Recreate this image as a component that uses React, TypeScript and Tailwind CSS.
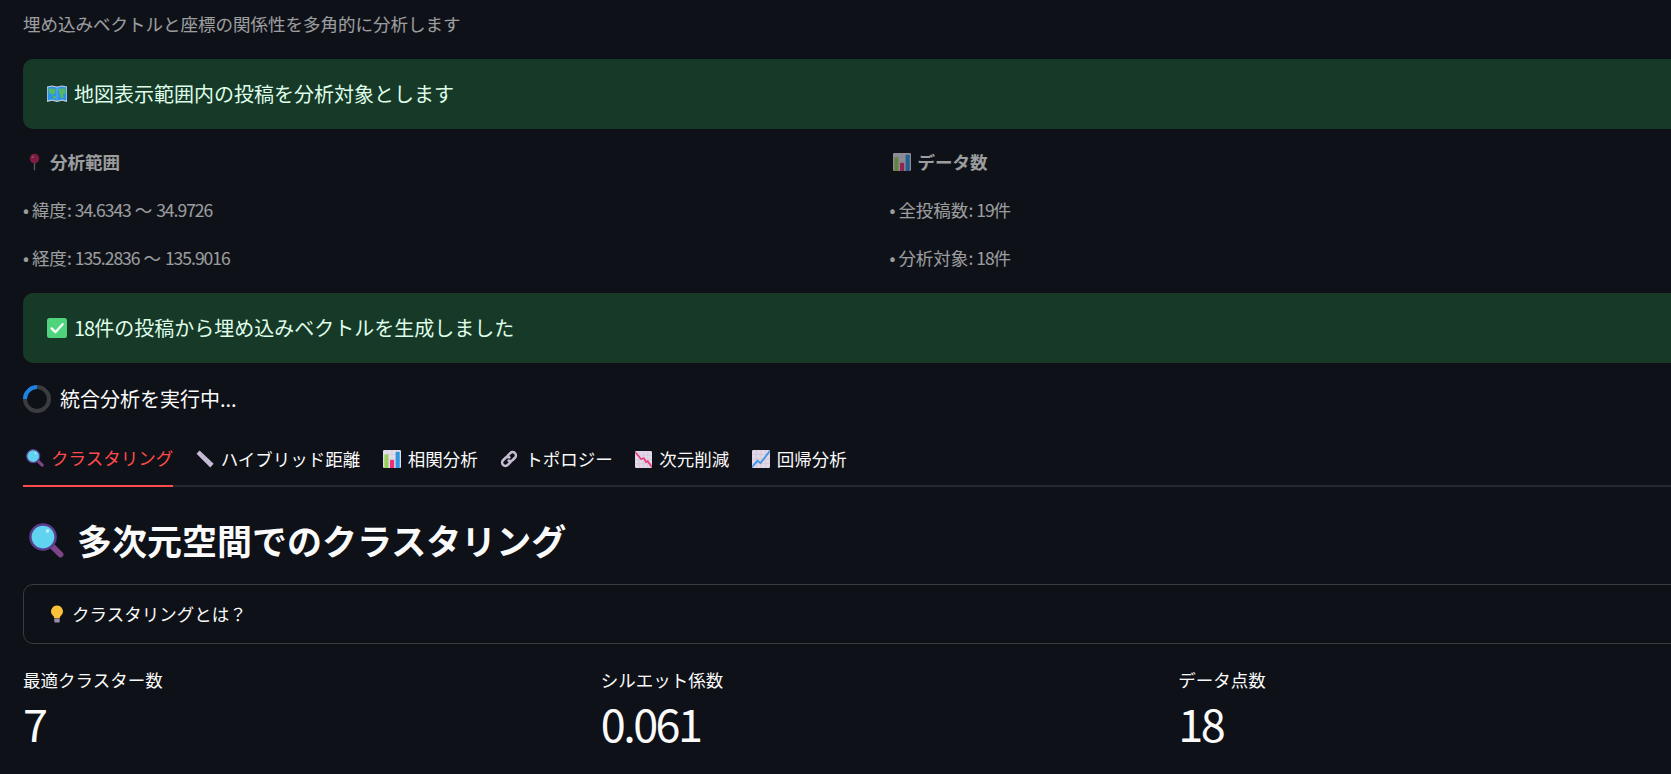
const jp = "font-['Noto_Sans_CJK_JP','Noto_Sans',sans-serif]";

const MapIcon = ({ className }: { className?: string }) => (
  <svg viewBox="0 0 20 20" className={className}>
    <path d="M0 2.6 L5 1.4 L10 2.6 L15 1.4 L20 2.6 V18 L15 16.8 L10 18 L5 16.8 L0 18Z" fill="#c4cde0" />
    <path d="M0.7 3.4 L5 2.4 L9.8 3.5 V16.8 L5 15.6 L0.7 16.6Z" fill="#2a93ea" />
    <path d="M10.2 3.5 L15 2.4 L19.3 3.4 V16.6 L15 15.6 L10.2 16.8Z" fill="#2a93ea" />
    <path d="M1.6 4.6 L8.4 4.8 L8 9.4 L5.4 11 L2.4 9Z M11.2 4.8 L18.4 4.6 L18.6 9.4 L16 10.2 L16.8 14 L14 14 L12.4 9.6Z M5.8 11.8 L9 12 L8.6 15 L6.2 14.4Z" fill="#57b862" />
  </svg>
);

const PinIcon = ({ className }: { className?: string }) => (
  <svg viewBox="0 0 20 20" className={className}>
    <rect x="9.2" y="8" width="1.6" height="12" rx="0.8" fill="#8b8d96" />
    <circle cx="10" cy="6" r="5.6" fill="#c9245c" />
    <circle cx="8" cy="4" r="1.4" fill="#e86a92" />
  </svg>
);

const BarsIcon = ({ className }: { className?: string }) => (
  <svg viewBox="0 0 20 20" className={className}>
    <rect width="20" height="20" rx="1.5" fill="#e4dfe9" />
    <path d="M0 5H20M0 10H20M0 15H20M5 0V20M10 0V20M15 0V20" stroke="#cfc8d8" strokeWidth="0.6" />
    <rect x="1.5" y="5" width="4.6" height="15" fill="#9ad05a" />
    <rect x="7.8" y="11" width="4.6" height="9" fill="#ee2f78" />
    <rect x="14" y="2" width="4.6" height="18" fill="#2f96e0" />
  </svg>
);

const CheckIcon = ({ className }: { className?: string }) => (
  <svg viewBox="0 0 20 20" className={className}>
    <rect width="20" height="20" rx="2.5" fill="#4fd47d" />
    <path d="M4.6 10.4 L8.4 14.2 L15.6 6.2" fill="none" stroke="#f4fff7" strokeWidth="2.4" strokeLinecap="round" strokeLinejoin="round" />
  </svg>
);

const LensIcon = ({ className }: { className?: string }) => (
  <svg viewBox="0 0 20 20" className={className}>
    <path d="M12.6 12.6 L18 18" stroke="#7d4488" strokeWidth="3.4" strokeLinecap="round" />
    <circle cx="8" cy="8" r="7.2" fill="#5fd3f0" stroke="#5a3c8c" strokeWidth="1.4" />
    <circle cx="10.6" cy="4.6" r="1" fill="#c4f1fb" />
  </svg>
);

const RulerIcon = ({ className }: { className?: string }) => (
  <svg viewBox="0 0 20 20" className={className}>
    <path d="M4 0.6 L19.6 15.4 L15.8 19.4 L0.6 4.2Z" fill="#c7bcd6" />
    <path d="M5.4 5.8 L7 4.2 M8.4 8.8 L10 7.2 M11.4 11.8 L13 10.2 M14.4 14.8 L16 13.2" stroke="#a99dbd" strokeWidth="0.8" />
  </svg>
);

const LinkIcon = ({ className }: { className?: string }) => (
  <svg viewBox="0 0 20 20" className={className}>
    <g fill="none" stroke="#c8bcd4" strokeWidth="2.8" strokeLinecap="round">
      <path d="M8.6 6.2 L11.4 3.4 A3.6 3.6 0 0 1 16.6 8.6 L13.8 11.4 A3.6 3.6 0 0 1 9.6 11.8" />
      <path d="M11.4 13.8 L8.6 16.6 A3.6 3.6 0 0 1 3.4 11.4 L6.2 8.6 A3.6 3.6 0 0 1 10.4 8.2" />
    </g>
  </svg>
);

const TrendIcon = ({ up, className }: { up?: boolean; className?: string }) => (
  <svg viewBox="0 0 20 20" className={className}>
    <rect width="20" height="20" rx="1.5" fill="#e2d8e8" />
    <path d="M0 5H20M0 10H20M0 15H20M5 0V20M10 0V20M15 0V20" stroke="#cbbfd6" strokeWidth="0.6" />
    {up ? (
      <path d="M0.5 18.5 L6 12 L9.5 14.5 L19.5 1.5" fill="none" stroke="#3f97e6" strokeWidth="2" />
    ) : (
      <path d="M0.5 1.5 L7 9.5 L10.5 8.5 L13 13 L15 12 L19.5 18.5" fill="none" stroke="#ee3a78" strokeWidth="2" />
    )}
  </svg>
);

const BulbIcon = ({ className }: { className?: string }) => (
  <svg viewBox="0 0 20 20" className={className}>
    <path d="M10 0.5 A6.6 6.6 0 0 1 14.4 12 C13.4 13 13.2 13.6 13.2 14.6 H6.8 C6.8 13.6 6.6 13 5.6 12 A6.6 6.6 0 0 1 10 0.5Z" fill="#fbc13a" />
    <rect x="7" y="15" width="6" height="4.4" rx="1" fill="#9d8aa8" />
  </svg>
);

const tabs = [
  { label: "クラスタリング", icon: <LensIcon className="ml-[3px] w-[18px] h-[18px]" />, gap: "gap-[7px]", active: true },
  { label: "ハイブリッド距離", icon: <RulerIcon className="w-[18px] h-[18px]" />, gap: "gap-[7px]" },
  { label: "相関分析", icon: <BarsIcon className="w-[18px] h-[18px]" />, gap: "gap-[7px]" },
  { label: "トポロジー", icon: <LinkIcon className="w-[18px] h-[18px]" />, gap: "gap-[7px]" },
  { label: "次元削減", icon: <TrendIcon className="w-[17px] h-[17px]" />, gap: "gap-[7px]" },
  { label: "回帰分析", icon: <TrendIcon up className="w-[18px] h-[18px]" />, gap: "gap-[7px]" },
];

const metrics = [
  { label: "最適クラスター数", value: "7" },
  { label: "シルエット係数", value: "0.061" },
  { label: "データ点数", value: "18" },
];

// digits in the reference are narrower than Noto's, tighten them
const Num = ({ children }: { children: React.ReactNode }) => (
  <span className="tracking-[-1px]">{children}</span>
);

const Colon = () => <span className="tracking-[-0.5px]">: </span>;

const Banner = ({ icon, children }: { icon: React.ReactNode; children: React.ReactNode }) => (
  <div className="flex h-[70px] items-center gap-[7px] rounded-[10px] bg-[#173928] pl-6 text-[20px] text-[#dffde9]">
    {icon}
    <span>{children}</span>
  </div>
);

const InfoColumn = ({
  icon,
  title,
  lines,
}: {
  icon: React.ReactNode;
  title: string;
  lines: React.ReactNode[];
}) => (
  <div className="text-[17.5px] leading-[26px] opacity-60">
    <div className="flex h-[26px] items-center gap-[7px] pl-[3px] font-bold">
      {icon}
      <span>{title}</span>
    </div>
    {lines.map((line, i) => (
      <div key={i} className="mt-[22px] h-[26px] whitespace-nowrap">
        <span className="tracking-[-0.5px]">• </span>
        {line}
      </div>
    ))}
  </div>
);

export default function App() {
  return (
    <div className={`h-[774px] w-[1671px] overflow-hidden bg-[#0e1117] text-[#fafafa] ${jp}`}>
      <div className="w-[1713px] ml-[23px]">
        <p className="pt-[10px] text-[17.5px] leading-[28px] opacity-60">
          埋め込みベクトルと座標の関係性を多角的に分析します
        </p>

        <div className="mt-[21px]">
          <Banner icon={<MapIcon className="w-5 h-5" />}>地図表示範囲内の投稿を分析対象とします</Banner>
        </div>

        <div className="mt-5 grid grid-cols-2 gap-5">
          <InfoColumn
            icon={<PinIcon className="w-[17px] h-[18px]" />}
            title="分析範囲"
            lines={[
              <>緯度<Colon /><Num>34.6343</Num> 〜 <Num>34.9726</Num></>,
              <>経度<Colon /><Num>135.2836</Num> 〜 <Num>135.9016</Num></>,
            ]}
          />
          <InfoColumn
            icon={<BarsIcon className="w-[18px] h-[18px]" />}
            title="データ数"
            lines={[
              <>全投稿数<Colon /><Num>19</Num>件</>,
              <>分析対象<Colon /><Num>18</Num>件</>,
            ]}
          />
        </div>

        <div className="mt-[22px]">
          <Banner icon={<CheckIcon className="w-5 h-5" />}><Num>18</Num>件の投稿から埋め込みベクトルを生成しました</Banner>
        </div>

        <div className="mt-[22px] flex h-[28px] items-center gap-[9px] text-[20px]">
          <div className="h-7 w-7 rotate-45 rounded-full border-4 border-[#3b3c40] border-l-[#1c83e1]" />
          <span>統合分析を実行中...</span>
        </div>

        <div className="mt-[22px] flex h-[52px] gap-[22.5px] border-b-2 border-[#26272f] text-[17.5px]">
          {tabs.map((tab) => (
            <div
              key={tab.label}
              className={`-mb-[2px] flex items-center ${tab.gap} pb-[4px] ${
                tab.active ? "border-b-2 border-[#ff4b4b] text-[#ff4b4b]" : ""
              }`}
            >
              {tab.icon}
              <span>{tab.label}</span>
            </div>
          ))}
        </div>

        <h2 className="mt-[28px] flex h-[50px] items-center gap-[13px] pl-[6px] text-[35px] font-bold">
          <LensIcon className="w-[35px] h-[35px]" />
          <span>多次元空間でのクラスタリング</span>
        </h2>

        <div className="mt-[19px] flex h-[60px] items-center gap-[6px] rounded-[10px] border border-[#3a3b40] pl-6 text-[17.5px]">
          <BulbIcon className="w-[18px] h-[18px]" />
          <span>クラスタリングとは？</span>
        </div>

        <div className="mt-[23px] grid grid-cols-3 gap-5">
          {metrics.map((metric) => (
            <div key={metric.label}>
              <div className="text-[17.5px] leading-[26px]">{metric.label}</div>
              <div className="text-[45px] leading-[60px] tracking-[-2.5px]">{metric.value}</div>
            </div>
          ))}
        </div>
      </div>
    </div>
  );
}
